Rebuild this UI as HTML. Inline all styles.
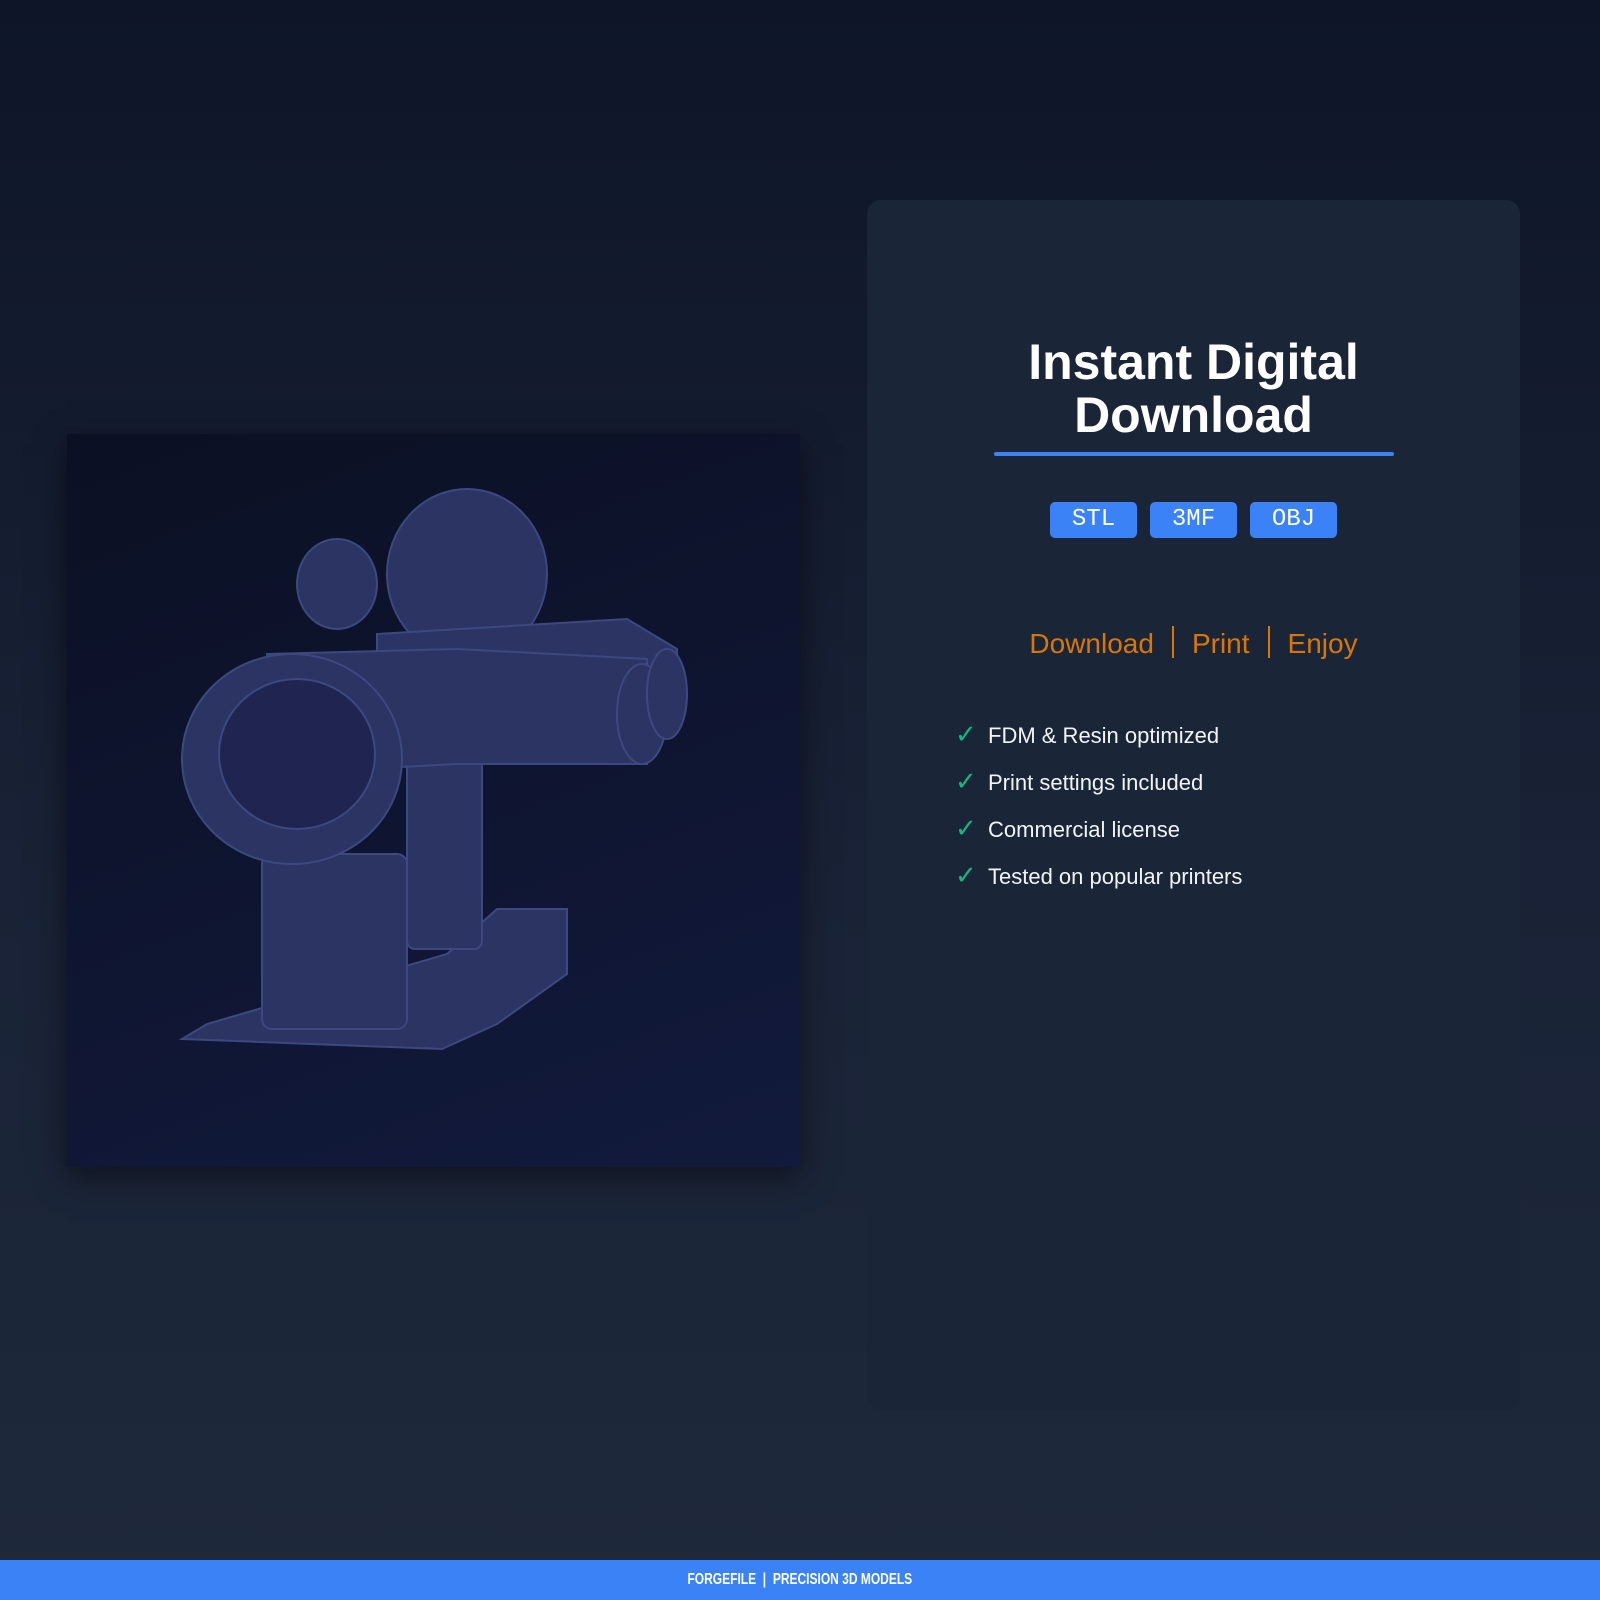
<!DOCTYPE html>
<html><head><meta charset="utf-8"><style>
*{margin:0;padding:0;box-sizing:border-box}
body{width:1600px;height:1600px;overflow:hidden;background:linear-gradient(#0e1529 0%,#1a2337 60%,#1e293b 100%);font-family:"Liberation Sans",sans-serif;position:relative}
.img{position:absolute;left:67px;top:434px;width:733px;height:733px;background:linear-gradient(160deg,#0b1023,#121a3d);box-shadow:0 10px 30px rgba(0,0,0,.5)}
.card{position:absolute;left:867px;top:200px;width:653px;height:1210px;background:#1b2538;border-radius:14px}
h1{position:absolute;left:867px;width:653px;top:336px;text-align:center;color:#fff;font-size:50px;line-height:53px;font-weight:bold}
.ul{position:absolute;left:994px;top:452px;width:400px;height:4px;background:#3b82f6;border-radius:2px}
.b{position:absolute;top:502px;width:87px;height:36px;background:#3b82f6;border-radius:5px;color:#fff;font:24px "Liberation Mono",monospace;text-align:center;line-height:36px}
.tag{position:absolute;top:626px;left:867px;width:653px;text-align:center;color:#d97706;font-size:28px}
.tag span{display:inline-block;width:2px;height:32px;background:#d97706;vertical-align:-5px;margin:0 18px}
.li{position:absolute;left:955px;color:#f1f5f9;font-size:22px}
.li b{color:#10b981;font-weight:normal;display:inline-block;width:33px;font-size:26px}
.ft{position:absolute;left:0;top:1560px;width:1600px;height:40px;background:#3b82f6;text-align:center;line-height:40px}
.ft span{display:inline-block;color:#fff;font:bold 16px "Liberation Sans",sans-serif;transform:scaleX(.75)}
</style></head><body>
<div class="img"><svg width="733" height="733" viewBox="0 0 733 733">
<g fill="#2b3463" stroke="#3d4880" stroke-width="2">
<path d="M115 605 L375 615 L430 590 L500 540 L500 475 L430 475 L380 520 L140 590 Z"/>
<rect x="195" y="420" width="145" height="175" rx="10"/>
<rect x="340" y="320" width="75" height="195" rx="8"/>
<ellipse cx="400" cy="140" rx="80" ry="85"/>
<ellipse cx="270" cy="150" rx="40" ry="45"/>
<path d="M310 200 L560 185 L610 215 L610 290 L520 300 L310 320 Z"/>
<path d="M200 220 L390 215 L580 225 L580 330 L390 330 L200 340 Z"/>
<ellipse cx="575" cy="280" rx="25" ry="50"/>
<ellipse cx="600" cy="260" rx="20" ry="45"/>
<ellipse cx="225" cy="325" rx="110" ry="105"/>
</g>
<ellipse cx="230" cy="320" rx="78" ry="75" fill="#1f2550" stroke="#3d4880" stroke-width="2"/>
</svg></div>
<div class="card"></div>
<h1>Instant Digital<br>Download</h1>
<div class="ul"></div>
<div class="b" style="left:1050px">STL</div>
<div class="b" style="left:1150px">3MF</div>
<div class="b" style="left:1250px">OBJ</div>
<div class="tag">Download<span></span>Print<span></span>Enjoy</div>
<div class="li" style="top:719px"><b>✓</b>FDM &amp; Resin optimized</div>
<div class="li" style="top:766px"><b>✓</b>Print settings included</div>
<div class="li" style="top:813px"><b>✓</b>Commercial license</div>
<div class="li" style="top:860px"><b>✓</b>Tested on popular printers</div>
<div class="ft"><span>FORGEFILE &nbsp;|&nbsp; PRECISION 3D MODELS</span></div>
</body></html>
